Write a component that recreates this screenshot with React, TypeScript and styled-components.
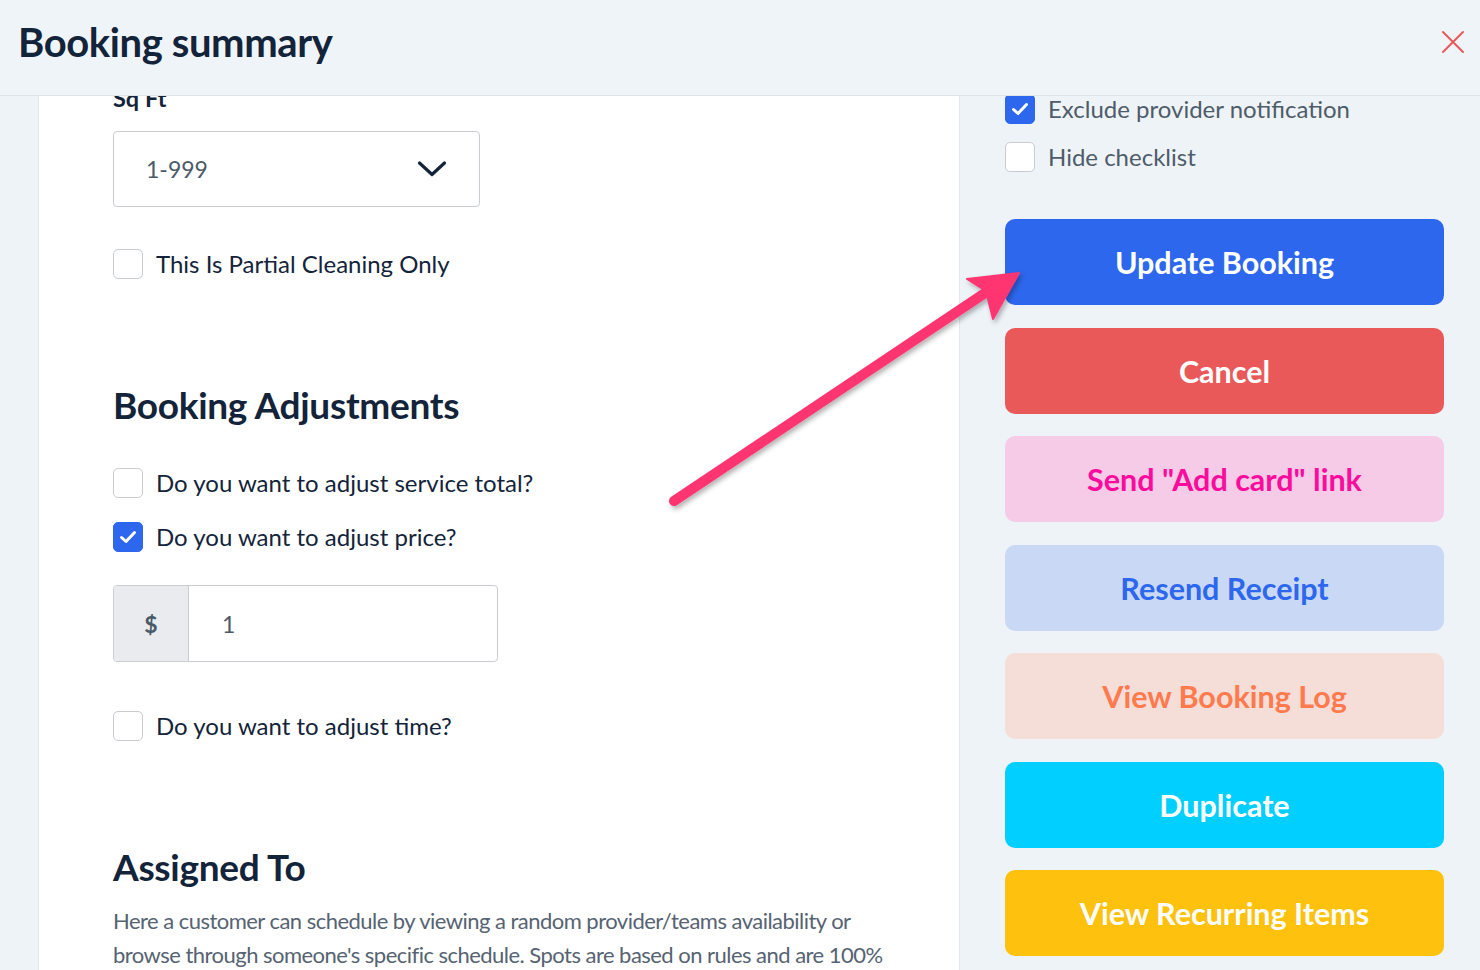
import React from "react";
import styled, { createGlobalStyle } from "styled-components";

const Global = createGlobalStyle`
  * { box-sizing: border-box; }
  html, body { margin: 0; padding: 0; }
  body { font-family: Lato, "Open Sans", Arial, sans-serif; background: #eef3f8; }
`;

const Page = styled.div`
  position: relative;
  width: 1480px;
  height: 970px;
  overflow: hidden;
  background: #eef3f8;
  display: flex;
  flex-direction: column;
`;

const Header = styled.header`
  height: 96px;
  flex: none;
  display: flex;
  align-items: center;
  justify-content: space-between;
  padding: 0 14px 12px 18px;
  background: #eff4f9;
  border-bottom: 1px solid #dce3ea;
  position: relative;
  z-index: 2;
`;

const Title = styled.h1`
  margin: 0;
  font-size: 40px;
  font-weight: 700;
  color: #13243a;
  letter-spacing: -0.4px;
`;

const Close = styled.button`
  border: 0;
  background: none;
  padding: 0;
  width: 26px;
  height: 26px;
  display: flex;
  cursor: pointer;
`;

const Body = styled.div`
  flex: 1;
  display: flex;
  overflow: hidden;
`;

const Gutter = styled.div`
  width: 38px;
  flex: none;
`;

const Main = styled.main`
  width: 922px;
  flex: none;
  background: #ffffff;
  border-left: 1px solid #e3e8ee;
  border-right: 1px solid #e3e8ee;
  padding-left: 74px;
`;

const Scroll = styled.div`
  margin-top: -12px;
  display: flex;
  flex-direction: column;
  align-items: flex-start;
`;

const FieldLabel = styled.div`
  font-size: 23.5px;
  font-weight: 700;
  line-height: 28px;
  color: #13243a;
`;

const Select = styled.div`
  margin-top: 19px;
  width: 367px;
  height: 76px;
  border: 1px solid #c9cdd2;
  border-radius: 4px;
  display: flex;
  align-items: center;
  justify-content: space-between;
  padding: 0 32px 0 32px;
  font-size: 23px;
  color: #4b5a69;
`;

const Row = styled.label<{ $mt: number }>`
  margin-top: ${(p) => p.$mt}px;
  display: flex;
  align-items: center;
  gap: 13px;
  font-size: 24px;
  line-height: 30px;
  color: ${(p) => (p.color ? p.color : "#13243a")};
`;

const Box = styled.span<{ $on?: boolean }>`
  width: 30px;
  height: 30px;
  flex: none;
  border-radius: 5px;
  border: 1px solid ${(p) => (p.$on ? "#2d67ee" : "#c8ccd1")};
  background: ${(p) => (p.$on ? "#2d67ee" : "#ffffff")};
  display: flex;
  align-items: center;
  justify-content: center;
`;

const SectionTitle = styled.h2<{ $mt: number }>`
  margin: ${(p) => p.$mt}px 0 0;
  font-size: 37px;
  line-height: 44px;
  font-weight: 700;
  color: #13243a;
  letter-spacing: -0.3px;
`;

const PriceInput = styled.div`
  margin-top: 33px;
  width: 385px;
  height: 77px;
  border: 1px solid #c9cdd2;
  border-radius: 4px;
  display: flex;
  overflow: hidden;
`;

const Prefix = styled.span`
  width: 75px;
  flex: none;
  background: #e9ebef;
  border-right: 1px solid #c9cdd2;
  display: flex;
  align-items: center;
  justify-content: center;
  font-size: 23px;
  font-weight: 700;
  color: #4b5a69;
`;

const PriceValue = styled.span`
  padding-left: 33px;
  display: flex;
  align-items: center;
  font-size: 23px;
  color: #4b5a69;
`;

const Para = styled.p`
  margin: 15px 0 0;
  width: 790px;
  font-size: 22px;
  line-height: 34px;
  color: #566372;
  letter-spacing: -0.53px;
`;

const Side = styled.aside`
  flex: 1;
  padding-left: 45px;
  display: flex;
  flex-direction: column;
`;

const SideChecks = styled.div`
  margin-top: -2px;
  display: flex;
  flex-direction: column;
`;

const Actions = styled.div`
  margin-top: 47px;
  display: flex;
  flex-direction: column;
  gap: 22.5px;
  width: 439px;
`;

const ActionButton = styled.button<{ $bg: string; $fg: string }>`
  height: 86px;
  border: 0;
  border-radius: 10px;
  background: ${(p) => p.$bg};
  color: ${(p) => p.$fg};
  font-family: Lato, "Open Sans", Arial, sans-serif;
  font-size: 30.5px;
  font-weight: 700;
  cursor: pointer;
`;

const ArrowLayer = styled.svg`
  position: absolute;
  left: 0;
  top: 0;
  pointer-events: none;
  z-index: 3;
`;

const Check = () => (
  <svg width="18" height="14" viewBox="0 0 18 14">
    <path d="M2.5 7.5 L7 11.5 L15.5 2.5" fill="none" stroke="#fff" strokeWidth="3" strokeLinecap="round" strokeLinejoin="round" />
  </svg>
);

const buttons = [
  { label: "Update Booking", bg: "#2d67ee", fg: "#ffffff" },
  { label: "Cancel", bg: "#ea5959", fg: "#ffffff" },
  { label: 'Send "Add card" link', bg: "#f5cbe7", fg: "#fc0b9c" },
  { label: "Resend Receipt", bg: "#c9d8f5", fg: "#2d67ee" },
  { label: "View Booking Log", bg: "#f5ddd8", fg: "#ff7a4d" },
  { label: "Duplicate", bg: "#00cfff", fg: "#ffffff" },
  { label: "View Recurring Items", bg: "#fec10d", fg: "#ffffff" },
];

export default function App() {
  return (
    <Page>
      <Global />
      <Header>
        <Title>Booking summary</Title>
        <Close aria-label="Close">
          <svg width="26" height="26" viewBox="0 0 26 26">
            <path d="M3 3 L23 23 M23 3 L3 23" stroke="#e85a5a" strokeWidth="2" strokeLinecap="round" />
          </svg>
        </Close>
      </Header>
      <Body>
        <Gutter />
        <Main>
          <Scroll>
            <FieldLabel>Sq Ft</FieldLabel>
            <Select>
              <span>1-999</span>
              <svg width="30" height="18" viewBox="0 0 30 18">
                <path d="M2.5 3 L15 14.5 L27.5 3" fill="none" stroke="#13243a" strokeWidth="3.2" strokeLinecap="round" strokeLinejoin="round" />
              </svg>
            </Select>
            <Row $mt={42}>
              <Box />
              This Is Partial Cleaning Only
            </Row>
            <SectionTitle $mt={104}>Booking Adjustments</SectionTitle>
            <Row $mt={41}>
              <Box />
              Do you want to adjust service total?
            </Row>
            <Row $mt={24}>
              <Box $on>
                <Check />
              </Box>
              Do you want to adjust price?
            </Row>
            <PriceInput>
              <Prefix>$</Prefix>
              <PriceValue>1</PriceValue>
            </PriceInput>
            <Row $mt={49}>
              <Box />
              Do you want to adjust time?
            </Row>
            <SectionTitle $mt={104}>Assigned To</SectionTitle>
            <Para>
              Here a customer can schedule by viewing a random provider/teams availability or browse through
              someone's specific schedule. Spots are based on rules and are 100% accurate.
            </Para>
          </Scroll>
        </Main>
        <Side>
          <SideChecks>
            <Row $mt={0} color="#4f5c69">
              <Box $on>
                <Check />
              </Box>
              Exclude provider notification
            </Row>
            <Row $mt={18} color="#4f5c69">
              <Box />
              Hide checklist
            </Row>
          </SideChecks>
          <Actions>
            {buttons.map((b) => (
              <ActionButton key={b.label} $bg={b.bg} $fg={b.fg}>
                {b.label}
              </ActionButton>
            ))}
          </Actions>
        </Side>
      </Body>
      <ArrowLayer width="1480" height="970" viewBox="0 0 1480 970">
        <defs>
          <filter id="sh" x="-10%" y="-10%" width="130%" height="130%">
            <feDropShadow dx="2" dy="3" stdDeviation="2.5" floodColor="#000" floodOpacity="0.3" />
          </filter>
        </defs>
        <g filter="url(#sh)">
          <path d="M674 501 L985 293" stroke="#ff3572" strokeWidth="10" strokeLinecap="round" fill="none" />
          <path d="M1019 273 L967 279 L986 291 L993 319 Z" fill="#ff3572" stroke="#ff3572" strokeWidth="2" strokeLinejoin="round" />
        </g>
      </ArrowLayer>
    </Page>
  );
}
